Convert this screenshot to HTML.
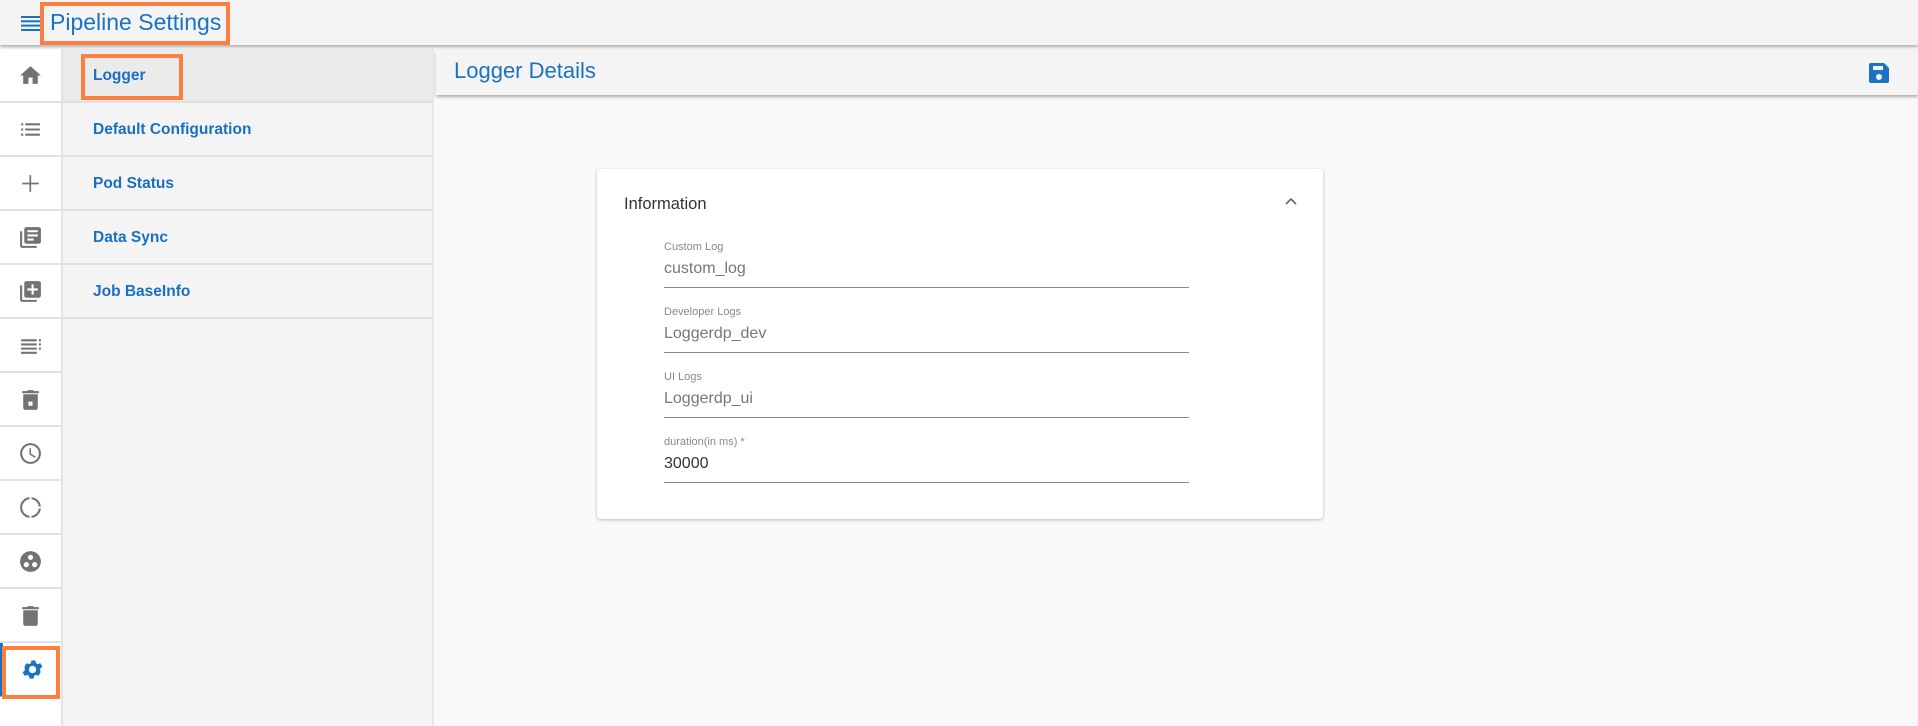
<!DOCTYPE html>
<html><head><meta charset="utf-8"><style>
*{margin:0;padding:0;box-sizing:border-box}
body{width:1918px;height:726px;overflow:hidden;background:#f9f9f9;font-family:"Liberation Sans",sans-serif;position:relative}
.top{position:absolute;left:0;top:0;width:1918px;height:45px;background:#f4f4f4;box-shadow:0 2px 3px rgba(0,0,0,.3);z-index:3}
.ob{position:absolute;border:4px solid #fd7f3f;z-index:5}
.title{position:absolute;left:50px;top:7px;font-size:23px;color:#1a72c1;line-height:30px}
.icons{position:absolute;left:0;top:49px;width:63px;height:677px;background:#fff;border-right:2px solid #e2e2e2}
.ic{height:54px;border-bottom:2px solid #e2e2e2;display:flex;align-items:center;justify-content:center}
.ic svg{width:25px;height:25px;fill:#737373}
.menu{position:absolute;left:63px;top:49px;width:371px;height:677px;background:#f4f4f4;border-right:2px solid #e8e8e8}
.mi{height:54px;border-bottom:2px solid #e0e0e0;padding-left:30px;padding-top:2px;display:flex;align-items:center;font-weight:bold;font-size:15.5px;color:#1a6fbf}
.hdr{position:absolute;left:436px;top:50px;width:1482px;height:45px;background:#f4f4f4;box-shadow:0 2px 3px rgba(0,0,0,.3)}
.hdr .t{position:absolute;left:18px;top:8px;font-size:22px;color:#1a72c1}
.card{position:absolute;left:597px;top:169px;width:726px;height:350px;background:#fff;border-radius:4px;box-shadow:0 1px 3px rgba(0,0,0,.25)}
.info{position:absolute;left:27px;top:26px;font-size:16.5px;color:#333}
.f{position:absolute;left:67px;width:525px;border-bottom:1px solid #8a8a8a;height:47px}
.f .l{font-size:11px;color:#888;position:absolute;top:0}
.f .v{font-size:16px;color:#777;position:absolute;top:19px}
</style></head><body>
<div class="top">
<svg style="position:absolute;left:21px;top:16px" width="20" height="15" viewBox="0 0 20 15"><rect y="0" width="20" height="2" fill="#1a72c1"/><rect y="4.3" width="20" height="2" fill="#1a72c1"/><rect y="8.6" width="20" height="2" fill="#1a72c1"/><rect y="13" width="20" height="2" fill="#1a72c1"/></svg>
<div class="title">Pipeline Settings</div>
</div>
<div class="ob" style="left:40px;top:2px;width:190px;height:43px"></div>
<div class="icons">
<div class="ic"><svg viewBox="0 0 24 24"><path d="M10 20v-6h4v6h5v-8h3L12 3 2 12h3v8z"/></svg></div>
<div class="ic"><svg viewBox="0 0 24 24"><path d="M3 6h2v2H3zm4 0h14v2H7zM3 11h2v2H3zm4 0h14v2H7zM3 16h2v2H3zm4 0h14v2H7z"/></svg></div>
<div class="ic"><svg viewBox="0 0 24 24"><path d="M11 4h1.6v7.2H20v1.6h-7.4V20H11v-7.2H4v-1.6h7z"/></svg></div>
<div class="ic"><svg viewBox="0 0 24 24"><path d="M4 6H2v14a2 2 0 002 2h14v-2H4zm16-4H8a2 2 0 00-2 2v12a2 2 0 002 2h12a2 2 0 002-2V4a2 2 0 00-2-2zm-1 9H9V9h10zm-4 4H9v-2h6zm4-8H9V5h10z"/></svg></div>
<div class="ic"><svg viewBox="0 0 24 24"><path d="M4 6H2v14a2 2 0 002 2h14v-2H4zm16-4H8a2 2 0 00-2 2v12a2 2 0 002 2h12a2 2 0 002-2V4a2 2 0 00-2-2zm-1 9h-4v4h-2v-4H9V9h4V5h2v4h4z"/></svg></div>
<div class="ic"><svg viewBox="0 0 24 24"><path d="M3 6h15v2H3zm0 4h15v2H3zm0 4h15v2H3zm0 4h15v2H3zM20 6h2v2h-2zm0 4h2v2h-2zm0 4h2v2h-2z"/></svg></div>
<div class="ic"><svg viewBox="0 0 24 24"><path d="M15 4V3H9v1H4v2h16V4zM5 7v13a2 2 0 002 2h10a2 2 0 002-2V7zm9.5 10.1l-1.4 1.4L12 17.4l-1.1 1.1-1.4-1.4 1.1-1.1-1.1-1.1 1.4-1.4 1.1 1.1 1.1-1.1 1.4 1.4-1.1 1.1z"/></svg></div>
<div class="ic"><svg viewBox="0 0 24 24"><path d="M12 2a10 10 0 100 20 10 10 0 000-20zm0 18a8 8 0 110-16 8 8 0 010 16zm.5-13H11v6l5.2 3.2.8-1.3-4.5-2.7z"/></svg></div>
<div class="ic"><svg viewBox="0 0 24 24"><path d="M13 2.05v2.02A8 8 0 0119.93 11h2.02A10 10 0 0013 2.05zM19.93 13A8 8 0 0113 19.930v2.02A10 10 0 0021.95 13zM11 19.93A8 8 0 014.07 13 8 8 0 0111 4.07V2.05a10 10 0 000 19.9z"/></svg></div>
<div class="ic"><svg viewBox="0 0 24 24"><path d="M12 2a10 10 0 100 20 10 10 0 000-20zM8 17.5a2.5 2.5 0 110-5 2.5 2.5 0 010 5zM9.5 8a2.5 2.5 0 115 0 2.5 2.5 0 01-5 0zm6.5 9.5a2.5 2.5 0 110-5 2.5 2.5 0 010 5z"/></svg></div>
<div class="ic"><svg viewBox="0 0 24 24"><path d="M15 4V3H9v1H4v2h16V4zM5 7v13a2 2 0 002 2h10a2 2 0 002-2V7z"/></svg></div>
<div class="ic" style="border-left:3px solid #1a72c1"><svg viewBox="0 0 24 24" style="fill:#1a72c1"><path d="M19.4 13a7.5 7.5 0 000-2l2.1-1.6-2-3.5-2.5 1a7 7 0 00-1.7-1l-.4-2.6h-4l-.4 2.6a7 7 0 00-1.7 1l-2.5-1-2 3.5L4.6 11a7.5 7.5 0 000 2l-2.1 1.6 2 3.5 2.5-1a7 7 0 001.7 1l.4 2.6h4l.4-2.6a7 7 0 001.7-1l2.5 1 2-3.5zM12 15.5a3.5 3.5 0 110-7 3.5 3.5 0 010 7z"/></svg></div>
</div>
<div class="ob" style="left:2px;top:646px;width:58px;height:53px"></div>
<div class="menu">
<div class="mi" style="background:#ebebeb">Logger</div>
<div class="mi">Default Configuration</div>
<div class="mi">Pod Status</div>
<div class="mi">Data Sync</div>
<div class="mi">Job BaseInfo</div>
</div>
<div class="ob" style="left:81px;top:54px;width:102px;height:46px"></div>
<div class="hdr"><div class="t">Logger Details</div>
<svg style="position:absolute;left:1433px;top:13px" width="20" height="20" viewBox="0 0 20 20"><path d="M2 0h13l5 5v13a2 2 0 01-2 2H2a2 2 0 01-2-2V2a2 2 0 012-2zm2 3v4h10V3zm6 8a3 3 0 100 6 3 3 0 000-6z" fill="#1a72c1"/></svg>
</div>
<div class="card">
<div class="info">Information</div>
<svg style="position:absolute;left:688px;top:28px" width="12" height="8" viewBox="0 0 12 8"><path d="M1 7l5-5 5 5" stroke="#666" stroke-width="1.6" fill="none"/></svg>
<div class="f" style="top:72px"><div class="l">Custom Log</div><div class="v">custom_log</div></div>
<div class="f" style="top:137px"><div class="l">Developer Logs</div><div class="v">Loggerdp_dev</div></div>
<div class="f" style="top:202px"><div class="l">UI Logs</div><div class="v">Loggerdp_ui</div></div>
<div class="f" style="top:267px"><div class="l">duration(in ms) *</div><div class="v" style="color:#333">30000</div></div>
</div>
</body></html>
